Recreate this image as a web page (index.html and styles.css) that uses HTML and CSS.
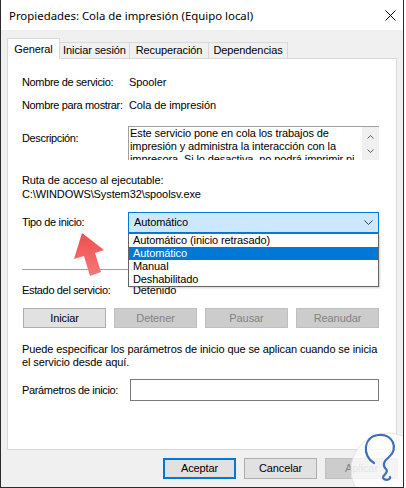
FILE: index.html
```html
<!DOCTYPE html>
<html lang="es">
<head>
<meta charset="utf-8">
<title>Propiedades: Cola de impresión</title>
<link rel="stylesheet" href="styles.css">
</head>
<body>
<div class="window">
  <div class="titlebar">
    <span class="title">Propiedades: Cola de impresión (Equipo local)</span>
    <svg class="close" width="11" height="11" viewBox="0 0 11 11"><path d="M0.5 0.5 L10.5 10.5 M10.5 0.5 L0.5 10.5" stroke="#000" stroke-width="1" fill="none"/></svg>
  </div>
  <div class="body">
    <div class="tabs">
      <div class="tab active t1">General</div>
      <div class="tab t2">Iniciar sesión</div>
      <div class="tab t3">Recuperación</div>
      <div class="tab t4">Dependencias</div>
    </div>
    <div class="panel">
      <div class="field f-name"><span class="lbl">Nombre de servicio:</span><span class="val">Spooler</span></div>
      <div class="field f-display"><span class="lbl">Nombre para mostrar:</span><span class="val">Cola de impresión</span></div>
      <div class="field f-desc">
        <span class="lbl">Descripción:</span>
        <div class="descbox">
          <div class="desctext">
            <div>Este servicio pone en cola los trabajos de</div>
            <div>impresión y administra la interacción con la</div>
            <div>impresora. Si lo desactiva, no podrá imprimir ni</div>
          </div>
          <div class="scroll">
            <svg class="sarrow" width="7" height="4" viewBox="0 0 7 4"><path d="M0.5 3.5 L3.5 0.5 L6.5 3.5" stroke="#606060" fill="none"/></svg>
            <svg class="sarrow" width="7" height="4" viewBox="0 0 7 4"><path d="M0.5 0.5 L3.5 3.5 L6.5 0.5" stroke="#606060" fill="none"/></svg>
          </div>
        </div>
      </div>
      <div class="path">
        <div>Ruta de acceso al ejecutable:</div>
        <div>C:\WINDOWS\System32\spoolsv.exe</div>
      </div>
      <div class="field f-type">
        <span class="lbl">Tipo de inicio:</span>
        <div class="combo">
          <span>Automático</span>
          <svg class="chev" width="9" height="5" viewBox="0 0 9 5"><path d="M0.5 0.5 L4.5 4.5 L8.5 0.5" stroke="#404040" fill="none"/></svg>
          <ul class="list">
            <li>Automático (inicio retrasado)</li>
            <li class="sel">Automático</li>
            <li>Manual</li>
            <li>Deshabilitado</li>
          </ul>
        </div>
      </div>
      <div class="sep"></div>
      <div class="field f-status"><span class="lbl">Estado del servicio:</span><span class="val status">Detenido</span></div>
      <div class="btns">
        <div class="btn">Iniciar</div>
        <div class="btn disabled">Detener</div>
        <div class="btn disabled">Pausar</div>
        <div class="btn disabled">Reanudar</div>
      </div>
      <p class="hint">Puede especificar los parámetros de inicio que se aplican cuando se inicia<br>el servicio desde aquí.</p>
      <div class="field f-params"><span class="lbl">Parámetros de inicio:</span><div class="input"></div></div>
    </div>
    <div class="footer">
      <div class="btn fbtn default">Aceptar</div>
      <div class="btn fbtn">Cancelar</div>
      <div class="btn fbtn disabled">Aplicar</div>
    </div>
  </div>
  <svg class="arrow" width="40" height="52" viewBox="70 228 40 52">
    <defs>
      <linearGradient id="ag" x1="0" y1="0" x2="0" y2="1">
        <stop offset="0" stop-color="#f04e4e"/>
        <stop offset="1" stop-color="#f47878"/>
      </linearGradient>
    </defs>
    <polygon points="82,233 104,250 95,253 101,272 90,276 84,256 74,259" fill="url(#ag)"/>
  </svg>
  <svg class="mark" width="70" height="70" viewBox="345 425 70 70">
    <circle cx="388" cy="470" r="37" fill="#ffffff" fill-opacity="0.78" stroke="#e4e4e4" stroke-width="1"/>
    <path d="M374 463 C362 456 363 437 378 435 C393 433 399 449 389 457 C384 461 382 465 386 469 C390 473 380 476 384 479 C387 481 391 479 390 477" stroke="#3f6fb4" stroke-width="2.2" fill="none" stroke-linecap="round"/>
  </svg>
</div>
</body>
</html>
```
FILE: styles.css
```css
* { box-sizing: border-box; }
html, body { margin: 0; padding: 0; background: #ffffff; }
body {
  font-family: "Liberation Sans", Arial, sans-serif;
  font-size: 11px;
  letter-spacing: -0.1px;
  color: #000;
}
.window {
  position: relative;
  width: 404px;
  height: 488px;
  border-left: 1px solid #2b2b2b;
  border-right: 1px solid #2b2b2b;
  border-bottom: 1px solid #2b2b2b;
  overflow: hidden;
  background: #f0f0f0;
}
.titlebar {
  height: 30px;
  background: #ffffff;
  display: flex;
  align-items: center;
  justify-content: space-between;
  padding: 0 7px 0 8px;
}
.title {
  font-family: "Noto Sans", "Open Sans", sans-serif;
  font-size: 11.4px;
  letter-spacing: 0;
  color: #000;
}
.close { display: block; margin-top: 1px; }
.body {
  height: 457px;
  padding: 8px 6px 0 6px;
}
.tabs {
  display: flex;
  align-items: flex-end;
  height: 20px;
}
.tab {
  height: 16px;
  border: 1px solid #d9d9d9;
  border-bottom: none;
  margin-left: -1px;
  background: #f0f0f0;
  text-align: center;
  line-height: 15px;
  white-space: nowrap;
}
.tab.active {
  position: relative;
  z-index: 1;
  height: 21px;
  margin-bottom: -1px;
  margin-left: 0;
  background: #ffffff;
  line-height: 20px;
  padding-bottom: 1px;
}
.t1 { width: 53px; }
.t2 { width: 71px; }
.t3 { width: 80px; }
.t4 { width: 80px; }
.panel {
  position: relative;
  height: 392px;
  background: #ffffff;
  border: 1px solid #d9d9d9;
  padding: 0 17px 0 14px;
  display: flex;
  flex-direction: column;
}
.field {
  display: grid;
  grid-template-columns: 106px 1fr;
  align-items: center;
  line-height: 13px;
  white-space: nowrap;
}
.lbl { letter-spacing: -0.35px; }
.val { padding-left: 1px; }
.f-name { margin-top: 17px; }
.f-display { margin-top: 10px; }
.f-desc { margin-top: 14px; align-items: start; }
.f-desc .lbl { margin-top: 6px; }
.descbox {
  height: 34px;
  overflow: hidden;
  border-top: 1px solid #a0a0a0;
  border-left: 1px solid #a0a0a0;
  display: flex;
}
.desctext {
  flex: 1;
  padding-left: 1px;
  line-height: 13px;
  white-space: nowrap;
  overflow: hidden;
}
.scroll {
  width: 17px;
  background: #f0f0f0;
  display: flex;
  flex-direction: column;
  align-items: center;
  padding-top: 8px;
  gap: 10px;
}
.sarrow { display: block; }
.path { margin-top: 13px; line-height: 14px; }
.f-type { margin-top: 11px; }
.combo {
  position: relative;
  height: 21px;
  background: #cce8ff;
  border: 1px solid #0078d7;
  padding-left: 5px;
  line-height: 19px;
  display: flex;
  align-items: center;
  justify-content: space-between;
  padding-right: 5px;
}
.chev { display: block; }
.list {
  position: absolute;
  top: 20px;
  left: -1px;
  width: 251px;
  margin: 0;
  padding: 0;
  list-style: none;
  background: #ffffff;
  border: 1px solid #646464;
  box-shadow: 1px 1px 2px rgba(0,0,0,0.18);
  z-index: 2;
}
.list li {
  height: 13px;
  line-height: 13px;
  padding-left: 4px;
  color: #000;
}
.list li.sel { background: #0078d7; color: #ffffff; }
.sep {
  margin-top: 36px;
  height: 1px;
  background: #a0a0a0;
}
.f-status { margin-top: 14px; }
.status { padding-left: 5px; }
.btns {
  margin-top: 11px;
  margin-left: 1px;
  display: grid;
  grid-template-columns: repeat(4, 1fr);
  gap: 8px;
}
.btn {
  height: 20px;
  background: #e1e1e1;
  border: 1px solid #adadad;
  text-align: center;
  line-height: 18px;
  color: #000;
}
.btn.disabled {
  background: #cccccc;
  border-color: #bfbfbf;
  color: #838383;
}
.hint {
  margin: 15px 0 0 0;
  line-height: 13px;
  white-space: nowrap;
}
.f-params { margin-top: 10px; }
.input {
  margin-left: 2px;
  height: 22px;
  border: 1px solid #7a7a7a;
  background: #ffffff;
}
.footer {
  margin-top: 8px;
  margin-right: -1px;
  display: flex;
  justify-content: flex-end;
  gap: 8px;
}
.fbtn {
  width: 73px;
  height: 21px;
  line-height: 19px;
}
.fbtn.default {
  border: 2px solid #0078d7;
  line-height: 17px;
}
.arrow {
  position: absolute;
  left: 69px;
  top: 228px;
}
.mark {
  position: absolute;
  left: 344px;
  top: 425px;
}
```
